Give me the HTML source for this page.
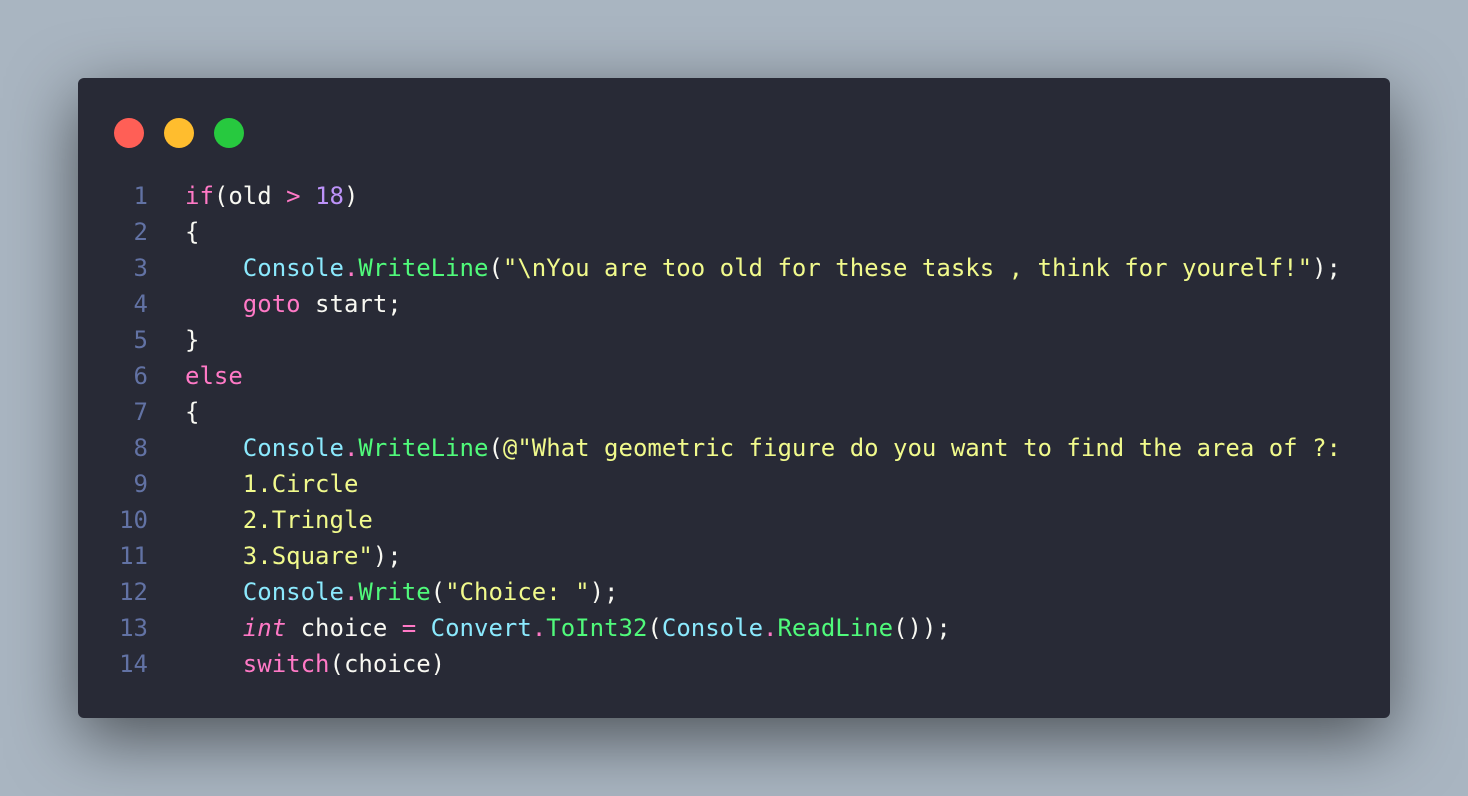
<!DOCTYPE html>
<html><head><style>
html,body{margin:0;padding:0;}
body{width:1468px;height:796px;background:#a9b5c1;position:relative;overflow:hidden;font-family:"DejaVu Sans Mono","Liberation Mono",monospace;}
.win{position:absolute;left:78px;top:78px;width:1312px;height:640px;background:#282a36;border-radius:6px;box-shadow:0 20px 68px rgba(0,0,0,0.55);}
.dot{position:absolute;top:40px;width:30px;height:30px;border-radius:50%;}
.code{position:absolute;left:0;top:100px;font-size:24px;line-height:36px;color:#f8f8f2;white-space:pre;}
.ln{display:inline-block;width:70px;text-align:right;color:#6272a4;margin-right:37px;}
.k{color:#ff79c6}.n{color:#bd93f9}.c{color:#8be9fd}.f{color:#50fa7b}.s{color:#f1fa8c}.i{color:#ff79c6;font-style:italic}
</style></head><body>
<div class="win">
<div class="dot" style="left:36px;background:#ff5f56"></div>
<div class="dot" style="left:86px;background:#ffbd2e"></div>
<div class="dot" style="left:136px;background:#27c93f"></div>
<div class="code"><div><span class="ln">1</span><span class="k">if</span>(old <span class="k">&gt;</span> <span class="n">18</span>)</div><div><span class="ln">2</span>{</div><div><span class="ln">3</span>    <span class="c">Console</span><span class="k">.</span><span class="f">WriteLine</span>(<span class="s">"\nYou are too old for these tasks , think for yourelf!"</span>);</div><div><span class="ln">4</span>    <span class="k">goto</span> start;</div><div><span class="ln">5</span>}</div><div><span class="ln">6</span><span class="k">else</span></div><div><span class="ln">7</span>{</div><div><span class="ln">8</span>    <span class="c">Console</span><span class="k">.</span><span class="f">WriteLine</span>(<span class="s">@"What geometric figure do you want to find the area of ?:</span></div><div><span class="ln">9</span><span class="s">    1.Circle</span></div><div><span class="ln">10</span><span class="s">    2.Tringle</span></div><div><span class="ln">11</span><span class="s">    3.Square"</span>);</div><div><span class="ln">12</span>    <span class="c">Console</span><span class="k">.</span><span class="f">Write</span>(<span class="s">"Choice: "</span>);</div><div><span class="ln">13</span>    <span class="i">int</span> choice <span class="k">=</span> <span class="c">Convert</span><span class="k">.</span><span class="f">ToInt32</span>(<span class="c">Console</span><span class="k">.</span><span class="f">ReadLine</span>());</div><div><span class="ln">14</span>    <span class="k">switch</span>(choice)</div></div>
</div>
</body></html>
